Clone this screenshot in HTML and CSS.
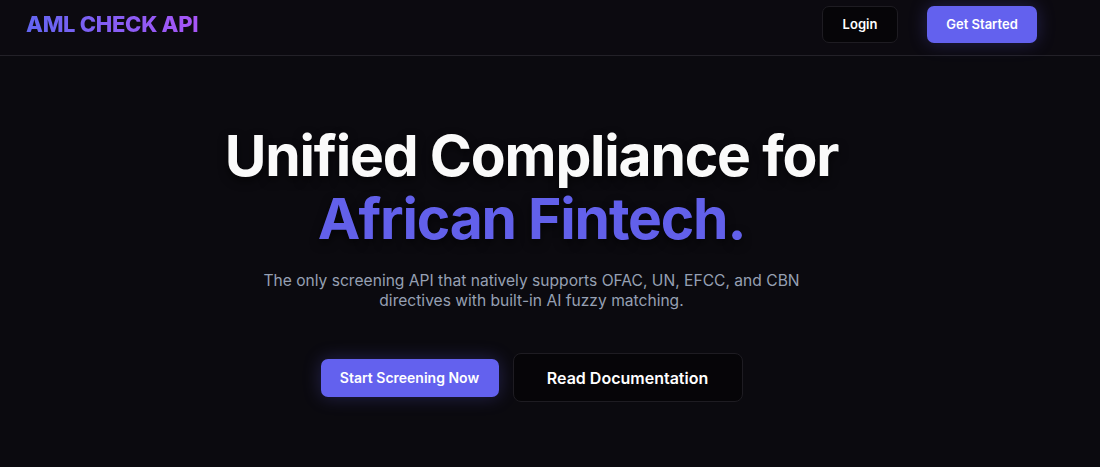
FILE: index.html
```html
<!DOCTYPE html>
<html lang="en">
<head>
<meta charset="utf-8">
<title>AML Check API</title>
<link rel="stylesheet" href="styles.css">
</head>
<body>
<header class="nav">
  <a class="logo" href="#">AML CHECK API</a>
  <div class="nav-actions">
    <a class="btn btn-ghost btn-sm" href="#">Login</a>
    <a class="btn btn-primary btn-sm" href="#">Get Started</a>
  </div>
</header>
<main class="hero">
  <h1 class="hero-title">Unified Compliance for<br><span class="accent">African Fintech.</span></h1>
  <p class="hero-sub">The only screening API that natively supports OFAC, UN, EFCC, and CBN directives with built-in AI fuzzy matching.</p>
  <div class="hero-actions">
    <a class="btn btn-primary btn-md" href="#">Start Screening Now</a>
    <a class="btn btn-ghost btn-lg" href="#">Read Documentation</a>
  </div>
</main>
</body>
</html>
```
FILE: styles.css
```css
html { background: #0b0a0f; }
::-webkit-scrollbar { width: 7px; }
::-webkit-scrollbar-track { background: #2b2a2f; }
::-webkit-scrollbar-thumb { background: #9d9ca1; border-radius: 2px; }

body {
  margin: 0;
  background: #0b0a0f;
  color: #fff;
  font-family: Inter, "Noto Sans", sans-serif;
  min-height: 640px;
}

a { text-decoration: none; color: inherit; }

.nav {
  height: 55px;
  display: flex;
  align-items: center;
  justify-content: space-between;
  padding: 0 63px 0 26px;
  border-bottom: 1px solid #232128;
  background: #0c0a10;
}

.logo {
  font-size: 22px;
  font-weight: 800;
  letter-spacing: -0.3px;
  background: linear-gradient(90deg, #6366f1 0%, #a855f7 100%);
  -webkit-background-clip: text;
  background-clip: text;
  color: transparent;
  margin-top: -8px;
}

.nav-actions {
  display: flex;
  align-items: center;
  gap: 29px;
  margin-top: -7px;
}

.btn {
  display: inline-flex;
  align-items: center;
  justify-content: center;
  font-weight: 600;
  border-radius: 7px;
  box-sizing: border-box;
}

.btn-primary {
  background: #6361ee;
  color: #fff;
  box-shadow: 0 0 18px rgba(99, 97, 238, 0.28);
}

.btn-ghost {
  background: #060508;
  border: 1px solid #1e1c22;
  color: #fff;
}

.btn-sm {
  height: 37px;
  font-size: 13px;
  padding: 0 21px;
}
.nav-actions .btn-ghost { width: 76px; padding: 0; }
.nav-actions .btn-primary { width: 110px; padding: 0; }

.hero {
  display: flex;
  flex-direction: column;
  align-items: center;
  padding: 68px 37px 0 0;
  text-align: center;
}

.hero-title {
  margin: 0;
  font-size: 57px;
  line-height: 63px;
  font-weight: 700;
  letter-spacing: -1.2px;
  color: #fafafa;
  text-shadow: 0 4px 10px rgba(0, 0, 0, 0.6);
}

.accent { color: #6260ea; }

.hero-sub {
  margin: 21px 0 0;
  max-width: 560px;
  font-size: 15.6px;
  line-height: 20px;
  color: #96a0b3;
}

.hero-actions {
  display: flex;
  align-items: center;
  gap: 14px;
  margin-top: 42px;
}

.btn-md {
  height: 38px;
  width: 178px;
  font-size: 14px;
}

.btn-lg {
  height: 49px;
  width: 230px;
  font-size: 16px;
  border-radius: 8px;
}
```
